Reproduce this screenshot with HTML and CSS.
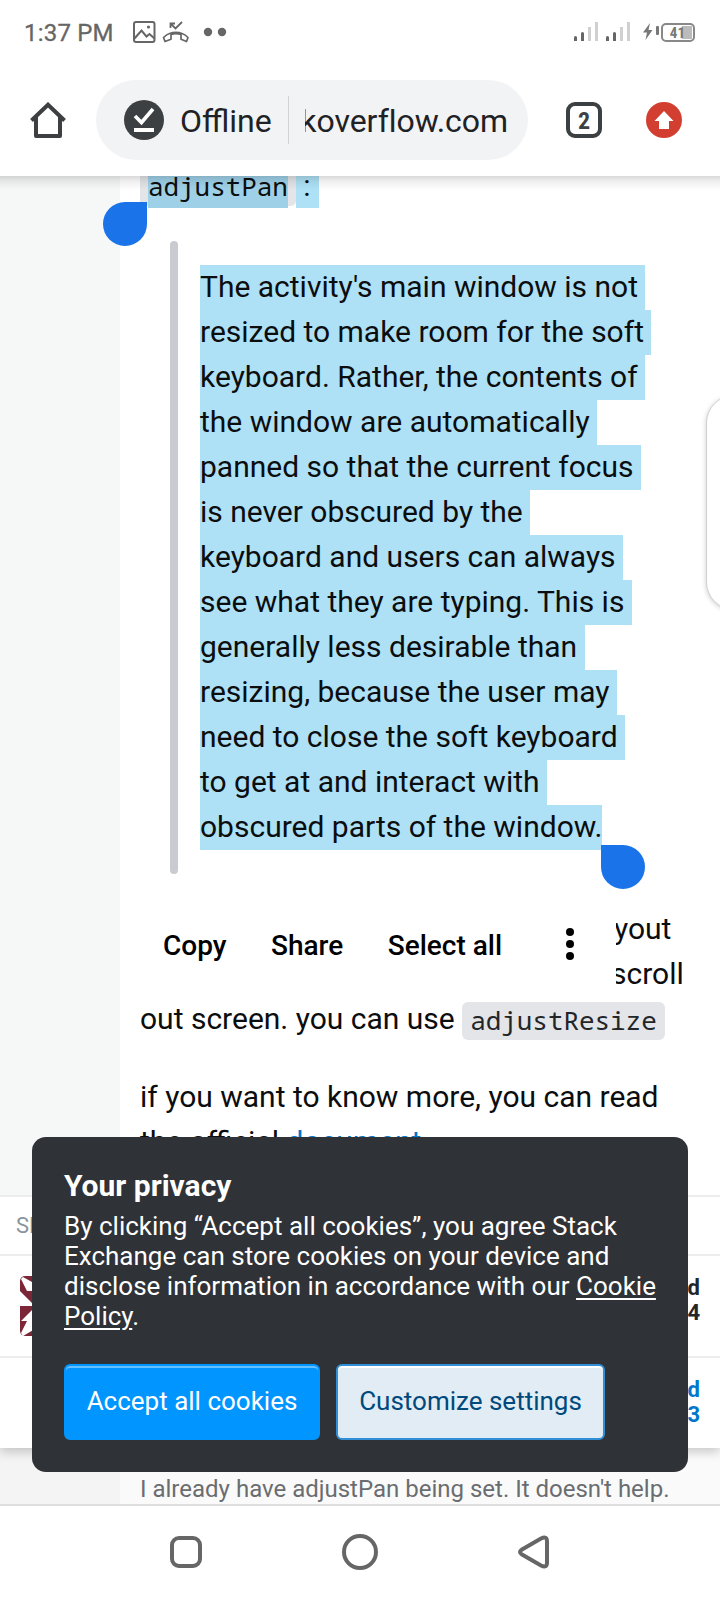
FILE: index.html
```html
<!DOCTYPE html>
<html lang="en">
<head>
<meta charset="utf-8">
<title>adjustPan</title>
<link rel="stylesheet" href="styles.css">
</head>
<body>
<div class="screen">
  <header class="status">
    <span class="clock">1:37 PM</span>
    <svg class="notif" width="96" height="24" viewBox="0 0 96 24" fill="none" stroke="#666" stroke-width="2">
      <rect x="1" y="2" width="20.500" height="20" rx="2"/>
      <path d="M1.500 18.500l7-8 5 6 3-2.500 5 4.500"/>
      <circle cx="15.500" cy="7" r="1.600" fill="#666" stroke="none"/>
      <path d="M37.500 8V3.500h4.500M37.500 3.500l5 5 6.500-6.500" stroke-width="1.800"/>
      <path d="M30.500 17.500c2-2 4-3.500 6-4 4-1.300 9-1.300 12.500 0 2 .600 4 2 6 4l-1.500 4-5.500-2.200v-4.800c-3-1-7-1-10 0v4.800L32 21.500z" stroke-width="1.700" stroke-linejoin="round"/>
      <circle cx="75" cy="12" r="4.200" fill="#666" stroke="none"/>
      <circle cx="89" cy="12" r="4.200" fill="#666" stroke="none"/>
    </svg>
    <svg class="signal" width="57" height="20" viewBox="0 0 57 20">
      <path fill="#666" d="M0 15.500q0-1.500 1.500-1.500T3 15.500V19H0zM7 11.500q0-1.500 1.500-1.500t1.500 1.500V19H7zM32 15.500q0-1.500 1.500-1.500t1.500 1.500V19h-3zM39 11.500q0-1.500 1.500-1.500t1.500 1.500V19h-3z"/>
      <path fill="#d0d0d0" d="M14 5h3v14h-3zM21 0h3v19h-3zM46 5h3v14h-3zM53 0h3v19h-3z"/>
    </svg>
    <svg class="bolt" width="17" height="18" viewBox="0 0 17 18" fill="#777">
      <path d="M7 0L0 9.500h4L2.500 17 9.500 7H5.500z"/>
      <rect x="13" y="3" width="3" height="9" rx="1"/>
    </svg>
    <div class="battery"><span>41</span></div>
  </header>

  <div class="toolbar">
    <svg class="home" width="36" height="36" viewBox="0 0 36 36" fill="none" stroke="#3c4043" stroke-width="4" stroke-linejoin="round">
      <path d="M1.500 18.500L18 2.700l16.500 15.800" stroke-linejoin="miter"/>
      <path d="M6 15v19h24V15"/>
    </svg>
    <div class="omnibox">
      <svg width="40" height="40" viewBox="0 0 40 40">
        <circle cx="20" cy="20" r="20" fill="#3c4043"/>
        <path d="M11 16l6.500 6.500L29 9" fill="none" stroke="#fff" stroke-width="3.600"/>
        <path d="M10 28h20v4H10z" fill="#fff"/>
      </svg>
      <span class="offline">Offline</span>
      <span class="rule"></span>
      <span class="url">koverflow.com</span>
    </div>
    <div class="tabs">2</div>
    <svg class="update" width="36" height="36" viewBox="0 0 36 36">
      <circle cx="18" cy="18" r="18" fill="#d23f31"/>
      <path d="M18 9l9.500 10H23v8H13v-8H8.500z" fill="#fff"/>
    </svg>
  </div>

  <main class="page">
    <article class="answer">
      <p class="lead"><code class="pan"><mark>adjustPan</mark></code><mark class="colon"> :</mark></p>
      <blockquote>
        <mark>The activity's main window is not </mark><br>
        <mark>resized to make room for the soft </mark><br>
        <mark>keyboard. Rather, the contents of </mark><br>
        <mark>the window are automatically </mark><br>
        <mark>panned so that the current focus </mark><br>
        <mark>is never obscured by the </mark><br>
        <mark>keyboard and users can always </mark><br>
        <mark>see what they are typing. This is </mark><br>
        <mark>generally less desirable than </mark><br>
        <mark>resizing, because the user may </mark><br>
        <mark>need to close the soft keyboard </mark><br>
        <mark>to get at and interact with </mark><br>
        <mark>obscured parts of the window.</mark>
      </blockquote>
      <p class="tail"><span class="end">yout</span><span class="end scroll">scroll</span>out screen. you can use <code>adjustResize</code></p>
      <p class="more">if you want to know more, you can read<br>the official <a>document</a></p>
    </article>
    <div class="comments"><p>I already have adjustPan being set. It doesn't help.</p></div>

    <i class="handle start"></i>
    <i class="handle stop"></i>
    <i class="edge"></i>

    <div class="actions">
      <span>Copy</span><span>Share</span><span>Select all</span>
      <svg width="8" height="32" viewBox="0 0 8 32"><circle cx="4" cy="4" r="4"/><circle cx="4" cy="16" r="4"/><circle cx="4" cy="28" r="4"/></svg>
    </div>

    <section class="sheet">
      <div class="row label">SH</div>
      <div class="row person">
        <svg width="60" height="60" viewBox="0 0 60 60">
          <rect width="60" height="60" rx="5" fill="#7b2738"/>
          <path d="M1 3l2-2 9 5v9H7zM0 15l15 15H0zM15 31L1 45h6L1 57l2 3 12-7z" fill="#fff"/>
        </svg>
        <b>d<br>4</b>
      </div>
      <div class="row linked"><b>d<br>3</b></div>
    </section>

    <section class="privacy">
      <h2>Your privacy</h2>
      <p>By clicking “Accept all cookies”, you agree Stack<br>Exchange can store cookies on your device and<br>disclose information in accordance with our <u>Cookie</u><br><u>Policy</u>.</p>
      <div class="buttons">
        <button class="accept">Accept all cookies</button>
        <button class="custom">Customize settings</button>
      </div>
    </section>
    <i class="cast"></i>
  </main>

  <nav class="nav">
    <svg width="32" height="32" viewBox="0 0 32 32"><rect x="2" y="2" width="28" height="28" rx="7"/></svg>
    <svg width="36" height="36" viewBox="0 0 36 36"><circle cx="18" cy="18" r="16"/></svg>
    <svg width="32" height="36" viewBox="0 0 32 36"><path d="M4 15.500L23 4.500q6-3 6 3v21q0 6-6 3L4 20.500q-4-2.500 0-5z"/></svg>
  </nav>
</div>
</body>
</html>
```

FILE: styles.css
```css
* { box-sizing: border-box; }
body { margin: 0; background: #fff; font-family: Roboto, "Liberation Sans", sans-serif; color: #0c0d0e; }
p, h2, blockquote { margin: 0; }
svg { display: block; flex: none; }
.screen { width: 720px; height: 1600px; display: flex; flex-direction: column; overflow: hidden; }

.status { height: 64px; flex: none; display: flex; align-items: center; padding: 0 25px 0 24px; color: #666; }
.clock { width: 109px; padding-top: 2px; font-size: 24px; letter-spacing: .2px; -webkit-text-stroke: .3px #666; }
.signal { margin-left: auto; margin-right: 12px; }
.bolt { margin-right: 1px; }
.battery { width: 34px; height: 19px; border: 2px solid #888; border-radius: 5px; padding-right: 8px;
  background: linear-gradient(#bbb, #bbb) 19px 1px / 10px 13px no-repeat;
  font: 700 15px/16px "Roboto Condensed", Roboto, sans-serif; text-align: right; color: #777; }

.toolbar { height: 112px; flex: none; display: flex; align-items: center; padding: 16px 38px 16px 30px; }
.omnibox { width: 432px; height: 80px; margin-left: 30px; border-radius: 40px; background: #f1f3f4;
  display: flex; align-items: center; padding: 0 20px 0 28px; font-size: 32px; color: #202124; }
.offline { width: 108px; margin-left: 16px; padding-top: 2px; }
.rule { width: 1px; height: 48px; background: #d0d3d6; }
.url { width: 203px; margin-left: 16px; padding-top: 2px; overflow: hidden; display: flex; justify-content: flex-end; white-space: nowrap; letter-spacing: -.05px; }
.tabs { width: 36px; height: 36px; margin-left: 38px; border: 4px solid #3c4043; border-radius: 9px;
  font: 700 24px/30px "Roboto Condensed", Roboto, sans-serif; text-align: center; color: #3c4043; }
.update { margin-left: 44px; }

.page { position: relative; height: 1328px; flex: none; overflow: hidden; background: #f6f8f8; }
.answer { margin-left: 120px; padding-left: 20px; height: 1272px; background: #fff; font-size: 30px; line-height: 45px; white-space: nowrap; overflow: hidden; }
mark { display: inline-block; height: 45px; vertical-align: top; background: #aee1f6; color: inherit; white-space: pre; line-height: 43px; }
code { font: 26px/30px "Droid Sans Mono", "Noto Sans Mono", "DejaVu Sans Mono", monospace; letter-spacing: -.06px; }
.lead { height: 45px; margin-top: -13px; display: flex; }
.pan { height: 43px; padding: 0 8px; border-radius: 5px; background: #e3e5e8; }
.pan mark { background: #9ed1e8; line-height: 47px; }
.colon { padding-right: 8px; line-height: 45px; }
blockquote { margin: 33px 0 32px 30px; padding: 24px 0 24px 30px; position: relative; }
blockquote::before { content: ""; position: absolute; left: 0; top: 0; bottom: 0; width: 8px; border-radius: 4px; background: #c8ccd0; }
.tail { height: 135px; }
.end { display: block; padding-left: 474px; }
.scroll { padding-left: 471px; }
.tail code { display: inline-block; height: 38px; padding: 0 8px; border-radius: 6px; background: #e3e5e8; color: #232629; line-height: 37px; vertical-align: top; margin-top: 6px; }
.more { margin-top: 33px; }
.more a { color: #0077cc; }
.comments { height: 56px; background: linear-gradient(90deg, #f4f4f4 120px, #fafafa 120px); padding: 24px 0 0 140px; font-size: 24px; line-height: 34px; color: #6a6d70; white-space: nowrap; }

.handle { position: absolute; width: 44px; height: 44px; background: #1a73e8; }
.start { left: 103px; top: 26px; border-radius: 22px 0 22px 22px; }
.stop { left: 601px; top: 669px; border-radius: 0 22px 22px 22px; }
.edge { position: absolute; left: 706px; top: 219px; width: 60px; height: 215px; border: 1px solid #d0d0d0; border-radius: 28px; background: #fff; box-shadow: 0 1px 5px #0003; }
.actions { position: absolute; left: 139px; top: 720px; width: 477px; height: 96px; background: #fff; display: flex; align-items: center; padding: 2px 0 0 24px; font-size: 28px; font-weight: 500; color: #000; white-space: nowrap; }
.actions span { margin-right: 44.500px; }
.actions svg { position: absolute; left: 427px; top: 32px; }

.sheet { position: absolute; left: 0; top: 1019px; width: 720px; height: 253px; background: #fff; box-shadow: 0 4px 10px #0003; clip-path: inset(0 0 -20px 0); }
.row { border-top: 2px solid #ededed; display: flex; align-items: center; padding: 0 20px; font-size: 22px; line-height: 25px; }
.row b { margin-left: auto; text-align: right; }
.label { height: 59px; padding: 0 16px; color: #8a939c; }
.person { height: 102px; color: #232629; }
.person b { padding-bottom: 12px; }
.linked { height: 92px; padding-bottom: 2px; color: #0077cc; }

.privacy { position: absolute; left: 32px; top: 961px; width: 656px; height: 335px; padding: 30px 32px 32px; border-radius: 14px; background: #2f3237; color: #fff; white-space: nowrap; }
.privacy h2 { font-size: 30px; line-height: 38px; font-weight: 700; }
.privacy p { margin-top: 6px; font-size: 26px; line-height: 30px; }
u { text-decoration-thickness: 2px; text-underline-offset: 3px; }
.buttons { display: flex; gap: 16px; margin-top: 33px; }
button { height: 76px; padding: 0 0 3px; border-radius: 6px; font: 26px/30px Roboto, sans-serif; }
.accept { width: 256px; border: 2px solid #0095ff; background: #0095ff; color: #fff; box-shadow: inset 0 2px 0 #66bfff; }
.custom { width: 269px; border: 2px solid #308fd6; background: #e1ecf4; color: #00497c; box-shadow: inset 0 2px 0 #fff; }
.cast { position: absolute; left: 0; top: 0; width: 100%; height: 14px; background: linear-gradient(#00000026, #00000010 40%, transparent); }

.nav { height: 96px; flex: none; border-top: 2px solid #dedede; background: #fff; display: flex; align-items: center; padding: 0 170px 2px; justify-content: space-between; }
.nav svg { fill: none; stroke: #666; stroke-width: 4; }
```
